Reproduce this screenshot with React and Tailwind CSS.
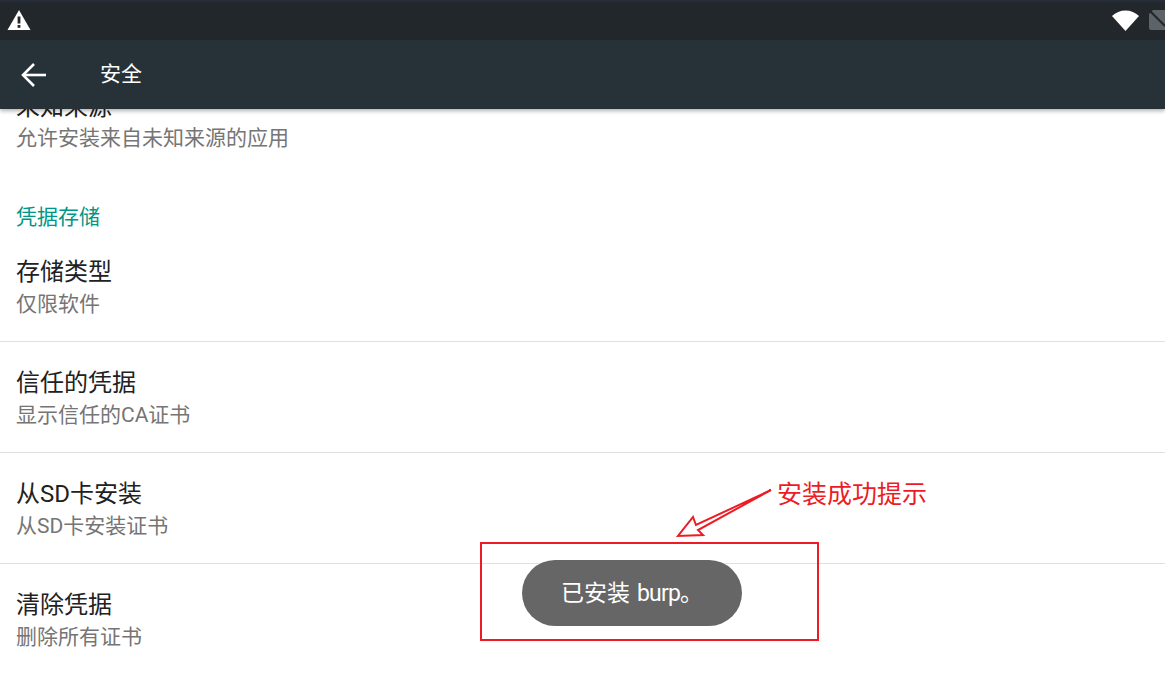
const font = { fontFamily: '"Roboto", "Noto Sans CJK SC", sans-serif' };

const rows = [
  { title: '存储类型', sub: '仅限软件' },
  { title: '信任的凭据', sub: '显示信任的CA证书' },
  { title: '从SD卡安装', sub: '从SD卡安装证书' },
  { title: '清除凭据', sub: '删除所有证书', last: true },
];

const Row = ({ title, sub, last }) => (
  <div className={`h-[111px] px-4 ${last ? '' : 'border-b border-[#e0e0e0]'}`}>
    <div className="pt-[25px] text-[24px] leading-[33px] text-[#212121]">{title}</div>
    <div className="text-[21px] leading-[30px] text-[#757575]">{sub}</div>
  </div>
);

export default function App() {
  return (
    <div className="relative h-[700px] w-[1165px] overflow-hidden bg-white flex flex-col" style={font}>
      {/* Status bar */}
      <div className="h-[40px] shrink-0 bg-[#21272b] border-t-2 border-[#262d3a] flex items-center justify-between pl-[7px] z-20">
        <svg width="24" height="22" viewBox="0 0 24 22" className="mb-[2px]">
          <path d="M12 1 L23.5 21 H0.5 Z" fill="#fff" />
          <rect x="10.6" y="7.5" width="2.8" height="7" fill="#21272b" />
          <rect x="10.6" y="16" width="2.8" height="2.8" fill="#21272b" />
        </svg>
        <div className="flex items-center gap-[10px] mb-[2px]">
          <svg width="27" height="21" viewBox="0 0 27 21">
            <path d="M0 6 C7 -1.5 20 -1.5 27 6 L13.5 21 Z" fill="#fff" />
          </svg>
          <svg width="16" height="20" viewBox="0 0 16 20">
            <path d="M4 0 H16 V20 H2 Q0 20 0 18 V4 Z" fill="#5d6366" />
            <path d="M0 0 L16 16" stroke="#21272b" strokeWidth="2" />
          </svg>
        </div>
      </div>

      {/* Toolbar */}
      <div className="h-[69px] shrink-0 bg-[#263238] flex items-center z-10 shadow-[0_2px_4px_rgba(0,0,0,0.3)]">
        <svg width="26" height="24" viewBox="0 0 26 24" className="ml-[21px]" fill="none" stroke="#fff" strokeWidth="2.6">
          <path d="M25 12 H2" />
          <path d="M13 1 L2 12 L13 23" />
        </svg>
        <span className="ml-[53px] text-[21px] text-white">安全</span>
      </div>

      {/* Settings list */}
      <div className="flex-1 overflow-hidden">
        <div className="mt-[-18px] px-4">
          <div className="text-[24px] leading-[32px] text-[#212121]">未知来源</div>
          <div className="text-[21px] leading-[30px] text-[#757575]">允许安装来自未知来源的应用</div>
        </div>
        <div className="mt-[49px] px-4 text-[21px] leading-[30px] text-[#009688]">凭据存储</div>
        <div className="mt-[-1px]">
          {rows.map((row) => (
            <Row key={row.title} {...row} />
          ))}
        </div>
      </div>

      {/* Toast */}
      <div className="absolute left-[522px] top-[560px] flex h-[66px] w-[220px] items-center rounded-[33px] bg-[#666666] pl-[39px] pt-[3px] text-[23px] text-white">
        已安装 <span className="ml-[7px] tracking-[-0.8px]">burp。</span>
      </div>

      {/* Annotation */}
      <div className="absolute left-[480px] top-[542px] h-[99px] w-[339px] border-2 border-[#ed1c24]" />
      <svg className="absolute left-[670px] top-[480px]" width="110" height="62" viewBox="0 0 110 62" fill="none" stroke="#ed1c24" strokeWidth="2">
        <path d="M101 10 L26 45 L23 37 L8 56 L33 55 L28 50 Z" fill="#fff" />
      </svg>
      <div className="absolute left-[777px] top-[477px] text-[25px] leading-[36px] text-[#ed1c24]">安装成功提示</div>
    </div>
  );
}
